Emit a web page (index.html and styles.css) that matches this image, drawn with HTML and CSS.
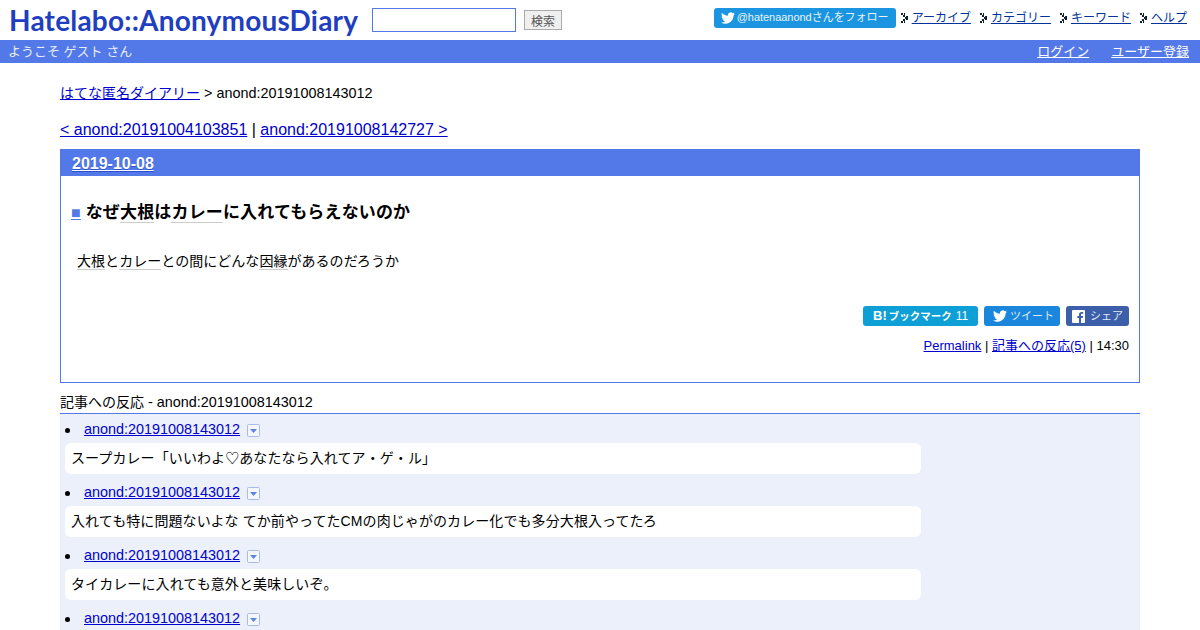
FILE: index.html
```html
<!DOCTYPE html>
<html lang="ja">
<head>
    <meta charset="UTF-8">
    <title>なぜ大根はカレーに入れてもらえないのか</title>
    <link rel="stylesheet" href="styles.css">
</head>
<body>
    <svg class="defs" width="0" height="0">
        <symbol id="bird" viewBox="0 0 24 24"><path d="M23.953 4.57a10 10 0 01-2.825.775 4.958 4.958 0 002.163-2.723c-.951.555-2.005.959-3.127 1.184a4.92 4.92 0 00-8.384 4.482C7.69 8.095 4.067 6.13 1.64 3.162a4.822 4.822 0 00-.666 2.475c0 1.71.87 3.213 2.188 4.096a4.904 4.904 0 01-2.228-.616v.06a4.923 4.923 0 003.946 4.827 4.996 4.996 0 01-2.212.085 4.936 4.936 0 004.604 3.417 9.867 9.867 0 01-6.102 2.105c-.39 0-.779-.023-1.17-.067a13.995 13.995 0 007.557 2.209c9.053 0 13.998-7.496 13.998-13.985 0-.21 0-.42-.015-.63A9.935 9.935 0 0024 4.59z"/></symbol>
        <symbol id="chevron" viewBox="0 0 7 10"><path d="M0 0h2v2H0zM2 2h2v2H2zM4 4h2v2H4zM2 6h2v2H2zM0 8h2v2H0zM5 3h2v4H5zM3 0h1v2H3zM3 8h1v2H3z"/></symbol>
        <symbol id="toggle" viewBox="0 0 13 13"><rect x=".5" y=".5" width="12" height="12" rx="1" fill="#f5f7fd" stroke="#a9bbec"/><path d="M3 5h7l-3.500 4z" fill="#5f84e6"/></symbol>
        <symbol id="fb" viewBox="0 0 13 13"><path fill-rule="evenodd" d="M1 0h11a1 1 0 011 1v11a1 1 0 01-1 1H9V8h1.800l.3-2H9V4.800c0-.6.3-1 1-1h1.200V2H9.600C8 2 7 3 7 4.600V6H5.400v2H7v5H1a1 1 0 01-1-1V1a1 1 0 011-1z"/></symbol>
    </svg>

    <!-- Header -->
    <header class="top">
        <a class="logo" href="#">Hatelabo::AnonymousDiary</a>
        <form class="search">
            <input class="search-input" type="text">
            <button class="search-button" type="button">検索</button>
        </form>
        <nav class="top-nav">
            <a class="follow" href="#"><svg class="bird"><use href="#bird"/></svg>@hatenaanondさんをフォロー</a>
            <a class="nav-link" href="#"><svg class="chevron"><use href="#chevron"/></svg><span>アーカイブ</span></a>
            <a class="nav-link" href="#"><svg class="chevron"><use href="#chevron"/></svg><span>カテゴリー</span></a>
            <a class="nav-link" href="#"><svg class="chevron"><use href="#chevron"/></svg><span>キーワード</span></a>
            <a class="nav-link" href="#"><svg class="chevron"><use href="#chevron"/></svg><span>ヘルプ</span></a>
        </nav>
    </header>

    <div class="userbar">
        <span>ようこそ ゲスト さん</span>
        <div class="userbar-links">
            <a href="#">ログイン</a>
            <a href="#">ユーザー登録</a>
        </div>
    </div>

    <main class="content">
        <p class="crumb"><a class="ja" href="#">はてな匿名ダイアリー</a> &gt; anond:20191008143012</p>
        <p class="pager"><a href="#">&lt; anond:20191004103851</a> | <a href="#">anond:20191008142727 &gt;</a></p>

        <!-- Entry -->
        <section class="day">
            <h2 class="day-title"><a href="#">2019-10-08</a></h2>
            <div class="day-body">
                <h3 class="entry-title"><a class="square" href="#">■</a> <span>なぜ<span class="kw">大根</span>は<span class="kw">カレー</span>に入れてもらえないのか</span></h3>
                <p class="entry-text"><span class="kw">大根</span>と<span class="kw">カレー</span>との間にどんな<span class="kw">因縁</span>があるのだろうか</p>
                <div class="share">
                    <a class="share-btn hatena" href="#"><b class="hb">B!</b><b class="bm">ブックマーク</b><span class="count">11</span></a>
                    <a class="share-btn tweet" href="#"><svg class="bird"><use href="#bird"/></svg><span class="share-text">ツイート</span></a>
                    <a class="share-btn fb" href="#"><svg class="fb-icon"><use href="#fb"/></svg><span class="share-text">シェア</span></a>
                </div>
                <p class="permalink"><a href="#">Permalink</a> | <a href="#">記事への反応(5)</a> | 14:30</p>
            </div>
        </section>

        <!-- Reactions -->
        <h4 class="refs-title"><span class="ja">記事への反応</span> - anond:20191008143012</h4>
        <ul class="refs">
            <li class="ref">
                <div class="ref-head"><a href="#">anond:20191008143012</a><svg class="toggle"><use href="#toggle"/></svg></div>
                <p class="ref-card">スープカレー「いいわよ♡あなたなら入れてア・ゲ・ル」</p>
            </li>
            <li class="ref">
                <div class="ref-head"><a href="#">anond:20191008143012</a><svg class="toggle"><use href="#toggle"/></svg></div>
                <p class="ref-card">入れても特に問題ないよな てか前やってたCMの肉じゃがのカレー化でも多分大根入ってたろ</p>
            </li>
            <li class="ref">
                <div class="ref-head"><a href="#">anond:20191008143012</a><svg class="toggle"><use href="#toggle"/></svg></div>
                <p class="ref-card">タイカレーに入れても意外と美味しいぞ。</p>
            </li>
            <li class="ref">
                <div class="ref-head"><a href="#">anond:20191008143012</a><svg class="toggle"><use href="#toggle"/></svg></div>
            </li>
        </ul>
    </main>
</body>
</html>
```

FILE: styles.css
```css
html {
    overflow: hidden;
}
body {
    margin: 0;
    background-color: #fff;
    color: #000;
    font-family: "Liberation Sans", "Noto Sans CJK JP", sans-serif;
    font-size: 14.4px;
    line-height: 1.2;
}
a {
    color: #00c;
}
p, h2, h3, h4, ul {
    margin: 0;
    padding: 0;
}
.defs {
    position: absolute;
}
.ja {
    font-size: 14px;
}

/* header */
.top {
    display: flex;
    align-items: center;
    height: 40px;
    padding: 0 13px 0 9px;
}
.logo {
    width: 350px;
    color: #1f3fc0;
    font-family: Lato, sans-serif;
    font-size: 28px;
    font-weight: 700;
    line-height: 40px;
    letter-spacing: .2px;
    text-decoration: none;
    white-space: nowrap;
}
.search {
    display: flex;
    align-items: center;
    gap: 8px;
    margin-left: 13px;
}
.search-input {
    box-sizing: border-box;
    width: 144px;
    height: 24px;
    margin: 0;
    border: 1px solid #5279e7;
    background: #fff;
}
.search-button {
    box-sizing: border-box;
    width: 38px;
    height: 20px;
    padding: 0;
    border: 1px solid #aaa;
    background: #efefef;
    color: #555;
    font-family: inherit;
    font-size: 12px;
}
.top-nav {
    display: flex;
    align-items: center;
    margin-left: auto;
    margin-bottom: 4px;
    font-size: 12px;
}
.follow {
    display: flex;
    align-items: center;
    box-sizing: border-box;
    height: 20px;
    width: 182px;
    padding-left: 7px;
    margin-right: 5px;
    border-radius: 3px;
    background-color: #1b95e0;
    color: #e6f3fc;
    font-size: 11px;
    letter-spacing: -.03px;
    text-decoration: none;
    white-space: nowrap;
}
.follow .bird {
    width: 14px;
    height: 14px;
    margin-right: 2px;
    fill: #fff;
}
.nav-link {
    display: flex;
    align-items: center;
    margin-right: 9px;
    color: #039;
    text-decoration: none;
}
.nav-link:last-child {
    margin-right: 0;
}
.nav-link span {
    text-decoration: underline;
}
.chevron {
    width: 7px;
    height: 10px;
    margin-right: 4px;
    fill: #123;
}

.userbar {
    display: flex;
    justify-content: space-between;
    align-items: center;
    height: 23px;
    padding: 0 11px 0 8px;
    background-color: #5279e7;
    color: #e8edfb;
    font-size: 13px;
}
.userbar-links {
    display: flex;
    gap: 22px;
}
.userbar-links a {
    color: #fff;
}

/* content */
.content {
    margin: 0 60px;
}
.crumb {
    margin-top: 21px;
    line-height: 18px;
}
.pager {
    margin-top: 18px;
    font-size: 16px;
    line-height: 20px;
}
.day {
    margin-top: 9px;
    border: 1px solid #5279e7;
    height: 232px;
}
.day-title {
    height: 26px;
    padding-left: 11px;
    background-color: #5279e7;
    font-size: 16px;
    line-height: 27px;
}
.day-title a {
    color: #fff;
    text-shadow: 0 1px 0 #2b4fd0;
}
.day-body {
    padding: 0 10px;
}
.entry-title {
    margin-top: 27px;
    font-size: 17px;
    letter-spacing: .15px;
    line-height: 20px;
}
.square {
    color: #5279e7;
    font-family: "Liberation Sans", sans-serif;
    font-size: 16px;
}
.kw {
    border-bottom: 1px solid #ccc;
}
.entry-text {
    margin-top: 28px;
    padding-left: 6px;
    font-size: 14px;
    letter-spacing: .04px;
    line-height: 20px;
}
.share {
    display: flex;
    justify-content: flex-end;
    gap: 6px;
    margin-top: 35px;
}
.share-btn {
    display: flex;
    align-items: center;
    height: 20px;
    border-radius: 3px;
    color: #dfeaf8;
    font-size: 11px;
    text-decoration: none;
    white-space: nowrap;
}
.share-btn .bird {
    width: 14px;
    height: 14px;
    margin-right: 3px;
    fill: #fff;
}
.share-text {
    padding-top: 2px;
}
.hatena {
    box-sizing: border-box;
    width: 115px;
    padding-left: 10px;
    background-color: #0e9fd6;
    color: #fff;
}
.hb {
    margin-right: 2px;
    font-size: 13px;
}
.bm {
    font-size: 10.5px;
}
.count {
    margin-left: 4px;
    font-size: 12px;
}
.tweet {
    width: 76px;
    padding-left: 9px;
    box-sizing: border-box;
    background-color: #1b87dc;
}
.fb {
    width: 63px;
    padding-left: 6px;
    box-sizing: border-box;
    background-color: #3d5ea8;
}
.fb-icon {
    width: 13px;
    height: 13px;
    margin-right: 5px;
    fill: #fff;
}
.permalink {
    margin-top: 11px;
    font-size: 13px;
    line-height: 18px;
    text-align: right;
}

/* reactions */
.refs-title {
    margin-top: 9px;
    border-bottom: 1px solid #5279e7;
    font-size: 14.4px;
    font-weight: 400;
    line-height: 21px;
}
.refs {
    background-color: #ebf0fb;
    padding: 6px 0 20px 5px;
    list-style: none;
}
.ref {
    margin-bottom: 9px;
}
.ref-head {
    display: flex;
    align-items: center;
    height: 20px;
    margin-bottom: 3px;
}
.ref-head::before {
    content: "";
    width: 5px;
    height: 5px;
    margin-right: 14px;
    border-radius: 50%;
    background-color: #000;
}
.toggle {
    width: 13px;
    height: 13px;
    margin-left: 7px;
}
.ref-card {
    width: 844px;
    padding: 6px;
    height: 19px;
    border-radius: 6px;
    background-color: #fff;
    font-size: 14px;
    letter-spacing: .09px;
    line-height: 19px;
}
```
